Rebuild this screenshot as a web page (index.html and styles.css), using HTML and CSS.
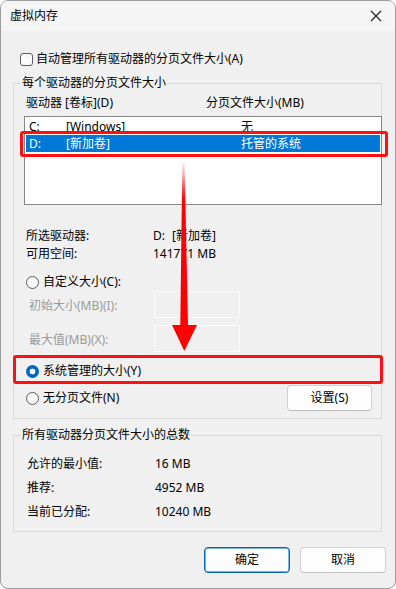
FILE: index.html
```html
<!DOCTYPE html>
<html lang="zh-CN">
<head>
<meta charset="utf-8">
<title>虚拟内存</title>
<link rel="stylesheet" href="styles.css">
</head>
<body>
<div class="window">
  <div class="titlebar">
    <span class="title">虚拟内存</span>
    <svg class="close" width="12" height="12" viewBox="0 0 12 12"><path d="M1 1 L11 11 M11 1 L1 11" stroke="#1b1b1b" stroke-width="1.1" fill="none"/></svg>
  </div>
  <div class="content">
    <div class="check-row"><span class="checkbox"></span><span>自动管理所有驱动器的分页文件大小(A)</span></div>

    <fieldset class="group group-drives">
      <legend>每个驱动器的分页文件大小</legend>
      <div class="list-header"><span>驱动器 [卷标](D)</span><span>分页文件大小(MB)</span></div>
      <div class="listbox">
        <div class="list-row"><span>C:</span><span>[Windows]</span><span>无</span></div>
        <div class="list-row selected"><span>D:</span><span>[新加卷]</span><span>托管的系统</span></div>
      </div>
      <div class="info">
        <span>所选驱动器:</span><span class="drive-val"><span>D:</span><span>[新加卷]</span></span>
        <span>可用空间:</span><span>141771 MB</span>
      </div>
      <div class="radio-row custom"><span class="radio"></span><span>自定义大小(C):</span></div>
      <div class="field-row"><span class="field-label">初始大小(MB)(I):</span><span class="textbox"></span></div>
      <div class="field-row second"><span class="field-label">最大值(MB)(X):</span><span class="textbox"></span></div>
      <div class="radio-row sys"><span class="radio checked"></span><span>系统管理的大小(Y)</span></div>
      <div class="nopage-row">
        <div class="radio-row"><span class="radio"></span><span>无分页文件(N)</span></div>
        <button class="btn set-btn">设置(S)</button>
      </div>
    </fieldset>

    <fieldset class="group group-total">
      <legend>所有驱动器分页文件大小的总数</legend>
      <div class="totals">
        <span>允许的最小值:</span><span>16 MB</span>
        <span>推荐:</span><span>4952 MB</span>
        <span>当前已分配:</span><span>10240 MB</span>
      </div>
    </fieldset>

    <div class="actions">
      <button class="btn primary">确定</button>
      <button class="btn">取消</button>
    </div>
  </div>

  <div class="mark mark-row"></div>
  <div class="mark mark-radio"></div>
  <svg class="arrow" width="396" height="589" viewBox="0 0 396 589">
    <defs>
      <linearGradient id="fade" x1="0" y1="161" x2="0" y2="200" gradientUnits="userSpaceOnUse">
        <stop offset="0" stop-color="#ff0000" stop-opacity="0"/>
        <stop offset="1" stop-color="#ff0000" stop-opacity="1"/>
      </linearGradient>
    </defs>
    <polygon points="182.3,161 184.5,161 188,325 197,325 184.3,351 172,325 180.3,325" fill="url(#fade)"/>
  </svg>
</div>
</body>
</html>
```

FILE: styles.css
```css
* { box-sizing: border-box; }

html, body {
  margin: 0;
  padding: 0;
  background: #ffffff;
}

body {
  font-family: "Noto Sans", "Noto Sans CJK SC", sans-serif;
  font-size: 12px;
  line-height: 16px;
  color: #000;
}

.window {
  position: relative;
  width: 396px;
  height: 589px;
  border: 1px solid #9c9c9c;
  border-radius: 8px;
  background: #f0f0f0;
  overflow: hidden;
}

.titlebar {
  height: 30px;
  background: #f5f5f5;
  display: flex;
  align-items: center;
  justify-content: space-between;
  padding: 0 9px 0 9px;
}

.title {
  font-size: 12px;
}

.close {
  display: block;
  margin-right: 4px;
}

.content {
  padding: 0 13px 0 12px;
}

.check-row {
  margin-top: 20px;
  height: 16px;
  display: flex;
  align-items: center;
}

.checkbox {
  width: 13px;
  height: 13px;
  margin-left: 7px;
  margin-right: 3px;
  border: 1px solid #5c5c5c;
  border-radius: 3px;
  background: #fbfbfb;
}

.group {
  margin: 8px 0 0 0;
  padding: 0;
  border: 1px solid #d9d9d9;
  min-width: 0;
}

.group legend {
  margin-left: 7px;
  padding: 0 1px;
  line-height: 16px;
}

.list-header {
  margin-top: 4px;
  height: 16px;
  display: grid;
  grid-template-columns: 180px 1fr;
  padding-left: 12px;
}

.listbox {
  margin-top: 5px;
  margin-left: 10px;
  width: 358px;
  height: 89px;
  border: 1px solid #868686;
  background: #fff;
  padding: 1px 1px 0 1px;
}

.list-row {
  height: 17px;
  display: grid;
  grid-template-columns: 37px 175px 1fr;
  align-items: center;
  padding-left: 3px;
  color: #000;
}

.list-row.selected {
  background: #0078d7;
  color: #fff;
}

.info {
  margin-top: 22px;
  padding-left: 12px;
  display: grid;
  grid-template-columns: 127px 1fr;
  grid-auto-rows: 18px;
  align-items: center;
}

.drive-val {
  display: flex;
  gap: 7px;
}

.radio-row {
  height: 18px;
  display: flex;
  align-items: center;
  padding-left: 12px;
}

.radio {
  width: 13px;
  height: 13px;
  border: 1px solid #5c5c5c;
  border-radius: 50%;
  background: #f7f7f7;
  margin-right: 4px;
  flex: none;
}

.radio.checked {
  border: none;
  background: radial-gradient(circle, #ffffff 0 2.6px, #0067c0 3.2px);
}

.custom {
  margin-top: 10px;
}

.field-row {
  display: flex;
  align-items: flex-start;
  padding-left: 15px;
  height: 27px;
}

.field-row.second {
  margin-top: 7px;
}

.field-label {
  width: 125px;
  margin-top: 7px;
  color: #9a9a9a;
}

.textbox {
  width: 86px;
  height: 27px;
  border: 1px solid #fbfbfb;
  background: #f0f0f0;
}

.sys {
  margin-top: 10px;
}

.nopage-row {
  margin-top: 5px;
  display: flex;
  justify-content: space-between;
  align-items: center;
  padding-right: 9px;
  margin-bottom: 7px;
}

.btn {
  font-family: inherit;
  font-size: 12px;
  line-height: 16px;
  color: #000;
  height: 26px;
  border: 1px solid #d0d0d0;
  border-bottom-color: #bdbdbd;
  border-radius: 4px;
  background: #fdfdfd;
  padding: 0;
  margin: 0;
}

.set-btn {
  width: 85px;
}

.totals {
  margin-top: 9px;
  margin-bottom: 7px;
  padding-left: 13px;
  display: grid;
  grid-template-columns: 128px 1fr;
  grid-auto-rows: 24px;
  align-items: center;
}

.actions {
  margin-top: 15px;
  margin-right: -4px;
  display: flex;
  justify-content: flex-end;
  gap: 10px;
}

.actions .btn {
  width: 86px;
}

.btn.primary {
  border: 1px solid #0067c0;
  box-shadow: inset 0 0 0 0.5px #0067c0;
}

.mark {
  position: absolute;
  border: 3px solid #ff1010;
  border-radius: 3px;
  pointer-events: none;
}

.mark-row {
  left: 19px;
  top: 130px;
  width: 368px;
  height: 26px;
}

.mark-radio {
  left: 12px;
  top: 354px;
  width: 370px;
  height: 29px;
}

.arrow {
  position: absolute;
  left: -1px;
  top: -1px;
  pointer-events: none;
}
```
